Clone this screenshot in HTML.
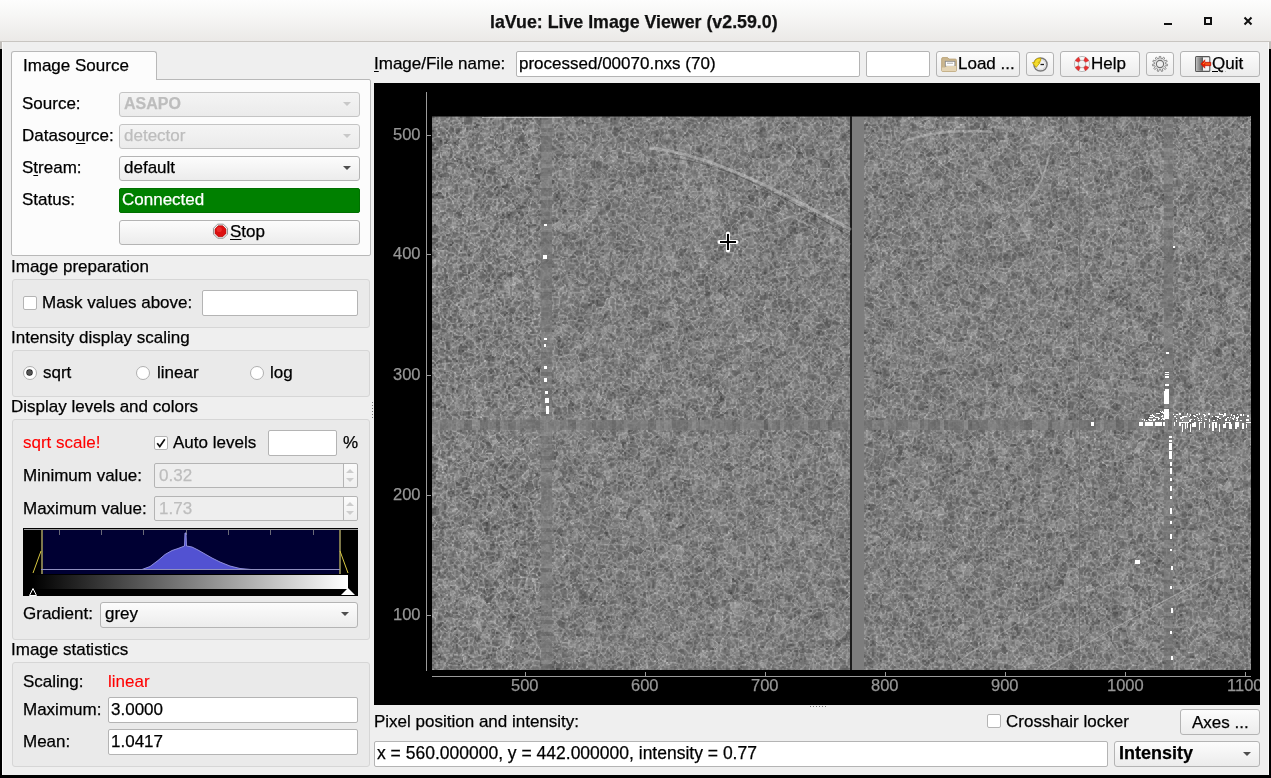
<!DOCTYPE html>
<html><head><meta charset="utf-8">
<style>
*{box-sizing:border-box;margin:0;padding:0}
html,body{-webkit-font-smoothing:antialiased;width:1271px;height:778px;overflow:hidden;background:#efefef;font-family:"Liberation Sans",sans-serif;font-size:17px;color:#000;position:relative;-webkit-text-stroke:0.25px currentColor}
.a{position:absolute}
.t{will-change:transform;position:absolute;white-space:nowrap;line-height:17px;font-size:17px}
.btn{position:absolute;border:1px solid #b4b4b4;border-radius:3px;background:linear-gradient(#fcfcfc,#ececec)}
.inp{position:absolute;border:1px solid #b4b4b4;border-radius:2px;background:#fff}
.grp{position:absolute;border:1px solid #d6d6d6;border-radius:3px;background:#eaeaea}
.dis{color:#bdbdbd}
.arrow{position:absolute;width:0;height:0;border-left:5px solid transparent;border-right:5px solid transparent;border-top:5px solid #4e4e4e}
.cb{position:absolute;width:14px;height:14px;border:1px solid #b4b4b4;border-radius:2px;background:#fff}
.rd{position:absolute;width:14px;height:14px;border:1px solid #b0b0b0;border-radius:50%;background:#fff}
.u{text-decoration:underline;text-underline-offset:2px}
.ax{will-change:transform;position:absolute;color:#969696;font-size:16.5px;line-height:17px;white-space:nowrap}
</style></head><body>
<!-- title bar -->
<div class="a" style="left:0;top:0;width:1271px;height:42px;background:linear-gradient(#fdfdfd 0%,#f7f7f6 35%,#ebe9e7 100%);border-bottom:1px solid #c8c5c1"></div>
<div class="t" style="left:490px;top:14px;font-weight:bold;font-size:17.8px;color:#111">laVue: Live Image Viewer (v2.59.0)</div>
<div class="a" style="left:1164px;top:23px;width:8px;height:2px;background:#111"></div>
<div class="a" style="left:1204px;top:17px;width:8px;height:8px;border:2px solid #111"></div>
<svg class="a" style="left:1243px;top:16px" width="10" height="10" viewBox="0 0 10 10"><path d="M1.5 1.5L8.5 8.5M8.5 1.5L1.5 8.5" stroke="#111" stroke-width="2"/></svg>

<!-- outer frame -->
<div class="a" style="left:0;top:42px;width:2px;height:7px;background:#c0bdb9"></div>
<div class="a" style="left:0;top:49px;width:2px;height:729px;background:#000"></div>
<div class="a" style="left:2px;top:42px;width:1px;height:733px;background:#fafafa"></div>
<div class="a" style="left:1269px;top:42px;width:2px;height:7px;background:#c0bdb9"></div>
<div class="a" style="left:1269px;top:49px;width:2px;height:729px;background:#000"></div>
<div class="a" style="left:1268px;top:42px;width:1px;height:733px;background:#fafafa"></div>
<div class="a" style="left:0;top:775px;width:1271px;height:3px;background:#000"></div>

<!-- ===== LEFT PANEL ===== -->
<!-- tab -->
<div class="a" style="left:11px;top:79px;width:360px;height:177px;border:1px solid #b8b8b8;border-radius:0 2px 2px 2px;background:#fcfcfc"></div>
<div class="a" style="left:11px;top:51px;width:146px;height:29px;border:1px solid #b8b8b8;border-bottom:none;border-radius:3px 3px 0 0;background:#fcfcfc"></div>
<div class="t" style="left:23px;top:57px">Image Source</div>

<div class="t" style="left:22px;top:95px">Source:</div>
<div class="btn" style="left:119px;top:92px;width:241px;height:25px;background:linear-gradient(#f4f4f4,#ebebeb);border-color:#c4c4c4"></div>
<div class="t dis" style="left:124px;top:95px;font-weight:bold;font-size:16px">ASAPO</div>
<div class="arrow" style="left:343px;top:102px;border-top-color:#c8c8c8;border-width:4px 4px 0 4px"></div>

<div class="t" style="left:22px;top:127px">Dataso<span class="u">u</span>rce:</div>
<div class="btn" style="left:119px;top:124px;width:241px;height:25px;background:linear-gradient(#f4f4f4,#ebebeb);border-color:#c4c4c4"></div>
<div class="t dis" style="left:124px;top:127px">detector</div>
<div class="arrow" style="left:343px;top:134px;border-top-color:#c8c8c8;border-width:4px 4px 0 4px"></div>

<div class="t" style="left:22px;top:159px">S<span class="u">t</span>ream:</div>
<div class="btn" style="left:119px;top:156px;width:241px;height:25px"></div>
<div class="t" style="left:124px;top:159px">default</div>
<div class="arrow" style="left:343px;top:166px;border-width:4px 4px 0 4px"></div>

<div class="t" style="left:22px;top:191px">Status:</div>
<div class="a" style="left:119px;top:188px;width:241px;height:25px;background:#008000;border-radius:2px;border:1px solid #007000"></div>
<div class="t" style="left:122px;top:191px;color:#fff">Connected</div>

<div class="btn" style="left:119px;top:220px;width:241px;height:25px"></div>
<svg class="a" style="left:212px;top:223px" width="17" height="17" viewBox="0 0 17 17"><polygon points="15.52,11.11 11.41,15.22 5.59,15.22 1.48,11.11 1.48,5.29 5.59,1.18 11.41,1.18 15.52,5.29" fill="#f4f4f4" stroke="#8a8a8a" stroke-width="0.9"/><polygon points="13.95,10.46 10.76,13.65 6.24,13.65 3.05,10.46 3.05,5.94 6.24,2.75 10.76,2.75 13.95,5.94" fill="#dc1010" stroke="#a80000" stroke-width="0.6"/><circle cx="7.2" cy="6.5" r="2.6" fill="#ff4a4a" opacity="0.45"/></svg>
<div class="t" style="left:230px;top:223px"><span class="u">S</span>top</div>

<!-- Image preparation -->
<div class="t" style="left:11px;top:258px">Image preparation</div>
<div class="grp" style="left:12px;top:279px;width:358px;height:49px"></div>
<div class="cb" style="left:23px;top:296px"></div>
<div class="t" style="left:42px;top:294px">Mask values above:</div>
<div class="inp" style="left:202px;top:290px;width:156px;height:26px"></div>

<!-- Intensity display scaling -->
<div class="t" style="left:11px;top:329px">Intensity display scaling</div>
<div class="grp" style="left:12px;top:350px;width:358px;height:47px"></div>
<div class="rd" style="left:23px;top:366px"></div>
<div class="a" style="left:27.4px;top:370.3px;width:5px;height:5px;border-radius:50%;background:#555;box-shadow:0 0 0 0.7px #1a1a1a"></div>
<div class="t" style="left:43px;top:364px">sqrt</div>
<div class="rd" style="left:136px;top:366px"></div>
<div class="t" style="left:157px;top:364px">linear</div>
<div class="rd" style="left:250px;top:366px"></div>
<div class="t" style="left:270px;top:364px">log</div>

<!-- Display levels and colors -->
<div class="t" style="left:11px;top:398px">Display levels and colors</div>
<div class="grp" style="left:12px;top:419px;width:358px;height:221px"></div>
<div class="t" style="left:23px;top:434px;color:#ff0000;-webkit-text-stroke:0.1px #ff0000">sqrt scale!</div>
<div class="cb" style="left:154px;top:436px"></div>
<svg class="a" style="left:155px;top:437px" width="12" height="12" viewBox="0 0 12 12"><path d="M2.2 6.2L4.8 9.6L9.8 2.2" fill="none" stroke="#111" stroke-width="1.7"/></svg>
<div class="t" style="left:173px;top:434px">Auto levels</div>
<div class="inp" style="left:268px;top:430px;width:69px;height:26px"></div>
<div class="t" style="left:343px;top:434px">%</div>

<div class="t" style="left:23px;top:467px">Minimum value:</div>
<div class="a" style="left:154px;top:463px;width:204px;height:25px;border:1px solid #b4b4b4;border-radius:2px;background:#eeeeee"></div>
<div class="a" style="left:344px;top:464px;width:13px;height:23px;background:linear-gradient(#fbfbfb,#efefef);border-radius:0 2px 2px 0"></div><div class="a" style="left:343px;top:464px;width:1px;height:23px;background:#b4b4b4"></div>
<div class="t dis" style="left:159px;top:467px">0.32</div>
<svg class="a" style="left:344px;top:465px" width="12" height="21" viewBox="0 0 12 21"><path d="M2 8L6 4L10 8ZM2 13L6 17L10 13Z" fill="#cdcdcd"/></svg>

<div class="t" style="left:23px;top:500px">Maximum value:</div>
<div class="a" style="left:154px;top:496px;width:204px;height:25px;border:1px solid #b4b4b4;border-radius:2px;background:#eeeeee"></div>
<div class="a" style="left:344px;top:497px;width:13px;height:23px;background:linear-gradient(#fbfbfb,#efefef);border-radius:0 2px 2px 0"></div><div class="a" style="left:343px;top:497px;width:1px;height:23px;background:#b4b4b4"></div>
<div class="t dis" style="left:159px;top:500px">1.73</div>
<svg class="a" style="left:344px;top:498px" width="12" height="21" viewBox="0 0 12 21"><path d="M2 8L6 4L10 8ZM2 13L6 17L10 13Z" fill="#cdcdcd"/></svg>

<!-- histogram -->
<div class="a" style="left:23px;top:528px;width:335px;height:68px;background:#000"></div>
<div class="a" style="left:24px;top:529px;width:334px;height:1px;background:#9a9a9a"></div>
<div class="a" style="left:41px;top:530px;width:299px;height:44px;background:#000033"></div>
<svg class="a" style="left:23px;top:528px" width="335" height="68" viewBox="0 0 335 68">
 <g stroke="#6a6a78" stroke-width="1">
  <path d="M36.5 2V7M78.5 2V7M120.5 2V7M163.5 2V7M205.5 2V7M247.5 2V7M290.5 2V7"/>
 </g>
 <path d="M19 2V46M317 2V46" stroke="#8a8450" stroke-width="1.8"/>
 <path d="M18 23L10 45M317 23L325 45" stroke="#d8c840" stroke-width="1"/>
 <path d="M119 41.5L127 38.5L135 32.5L142 26.5L149 22.5L155 20.5L161.5 18L162 5L163 5L163.5 18L169 19L175 22L182 26L189 30L197 34L207 38L217 40.5L228 41.5Z" fill="#5252d2" stroke="#9a9ae6" stroke-width="0.9" stroke-linejoin="round"/>
 <path d="M18 41.5H317" stroke="#9090c0" stroke-width="1"/>
 <defs><linearGradient id="gg" x1="0" x2="1"><stop offset="0" stop-color="#000"/><stop offset="1" stop-color="#fff"/></linearGradient></defs>
 <rect x="10" y="47" width="315" height="14" fill="url(#gg)"/>
 <path d="M6.5 67.5L10 60.5L13.5 67.5Z" fill="none" stroke="#fff" stroke-width="1"/>
 <path d="M318 67L325 60L332 67Z" fill="#fff"/>
</svg>

<div class="t" style="left:23px;top:605px">Gradient:</div>
<div class="btn" style="left:100px;top:602px;width:258px;height:26px"></div>
<div class="t" style="left:105px;top:605px">grey</div>
<div class="arrow" style="left:341px;top:612px;border-width:4px 4px 0 4px"></div>

<!-- Image statistics -->
<div class="t" style="left:11px;top:641px">Image statistics</div>
<div class="grp" style="left:12px;top:662px;width:358px;height:105px"></div>
<div class="t" style="left:23px;top:673px">Scaling:</div>
<div class="t" style="left:108px;top:673px;color:#ff0000;-webkit-text-stroke:0.1px #ff0000">linear</div>
<div class="t" style="left:23px;top:701px">Maximum:</div>
<div class="inp" style="left:108px;top:697px;width:250px;height:26px"></div>
<div class="t" style="left:111px;top:701px">3.0000</div>
<div class="t" style="left:23px;top:733px">Mean:</div>
<div class="inp" style="left:108px;top:729px;width:250px;height:26px"></div>
<div class="t" style="left:111px;top:733px">1.0417</div>

<!-- ===== RIGHT PANEL ===== -->
<div class="t" style="left:374px;top:55px"><span class="u">I</span>mage/File name:</div>
<div class="inp" style="left:516px;top:51px;width:344px;height:26px"></div>
<div class="t" style="left:519px;top:55px">processed/00070.nxs (70)</div>
<div class="inp" style="left:866px;top:51px;width:64px;height:26px"></div>

<div class="btn" style="left:936px;top:51px;width:84px;height:26px"></div>
<svg class="a" style="left:941px;top:57px" width="16" height="15" viewBox="0 0 16 15"><path d="M0.7 1.7Q0.7 0.6 1.8 0.6H6.6L8 2.1H14.3Q15.4 2.1 15.4 3.2V13.4Q15.4 14.5 14.3 14.5H1.8Q0.7 14.5 0.7 13.4Z" fill="#cbb68e" stroke="#b9a276" stroke-width="0.9"/><rect x="4.3" y="4.3" width="9.6" height="5" fill="#fff" stroke="#8a8a8a" stroke-width="0.9"/><path d="M6 6.2H12" stroke="#a0a0a0" stroke-width="0.9"/><path d="M0.9 10.4H4L5.8 8.9H15.2V13.4Q15.2 14.3 14.3 14.3H1.8Q0.9 14.3 0.9 13.4Z" fill="#e4d4b4"/></svg>
<div class="t" style="left:958px;top:55px">Load ...</div>

<div class="btn" style="left:1026px;top:52px;width:28px;height:24px"></div>
<svg class="a" style="left:1031px;top:55px" width="18" height="18" viewBox="0 0 18 18"><circle cx="9.5" cy="9.5" r="6.6" fill="#f2f2f2" stroke="#7a7a7a" stroke-width="1.5"/><circle cx="9.5" cy="9.5" r="5" fill="none" stroke="#d0d0d0" stroke-width="0.8"/><path d="M9.5 9.5H13" stroke="#1a1a1a" stroke-width="1.3"/><path d="M4.2 5.2Q6 3 9.6 3.2V6.2Q7.8 6 7.3 7.6H9L5.2 12.3L1.4 7.6H3.6Q3.6 6.2 4.2 5.2Z" fill="#f3dc2c" stroke="#c9a800" stroke-width="0.9" stroke-linejoin="round"/></svg>

<div class="btn" style="left:1060px;top:51px;width:80px;height:26px"></div>
<svg class="a" style="left:1073px;top:55px" width="18" height="18" viewBox="0 0 18 18"><circle cx="9" cy="9" r="5.7" fill="none" stroke="#f8f8f8" stroke-width="3.4"/><circle cx="9" cy="9" r="7.6" fill="none" stroke="#a8a8a8" stroke-width="0.8"/><circle cx="9" cy="9" r="3.8" fill="none" stroke="#a8a8a8" stroke-width="0.8"/><path d="M15.65 12.24A7.4 7.4 0 0 1 12.24 15.65L10.75 12.60A4.0 4.0 0 0 0 12.60 10.75ZM5.76 15.65A7.4 7.4 0 0 1 2.35 12.24L5.40 10.75A4.0 4.0 0 0 0 7.25 12.60ZM2.35 5.76A7.4 7.4 0 0 1 5.76 2.35L7.25 5.40A4.0 4.0 0 0 0 5.40 7.25ZM12.24 2.35A7.4 7.4 0 0 1 15.65 5.76L12.60 7.25A4.0 4.0 0 0 0 10.75 5.40Z" fill="#e83030" stroke="#c02020" stroke-width="0.4"/></svg>
<div class="t" style="left:1091px;top:55px">Help</div>

<div class="btn" style="left:1146px;top:52px;width:28px;height:24px"></div>
<svg class="a" style="left:1151px;top:55px" width="18" height="18" viewBox="0 0 18 18"><path d="M8.12 3.47L8.21 1.44L9.79 1.44L9.88 3.47L11.25 3.87L12.42 2.21L13.75 3.07L12.73 4.82L13.67 5.91L15.55 5.14L16.21 6.58L14.40 7.50L14.60 8.92L16.59 9.29L16.37 10.86L14.35 10.65L13.75 11.96L15.23 13.35L14.19 14.55L12.61 13.28L11.40 14.06L11.89 16.03L10.37 16.48L9.72 14.55L8.28 14.55L7.63 16.48L6.11 16.03L6.60 14.06L5.39 13.28L3.81 14.55L2.77 13.35L4.25 11.96L3.65 10.65L1.63 10.86L1.41 9.29L3.40 8.92L3.60 7.50L1.79 6.58L2.45 5.14L4.33 5.91L5.27 4.82L4.25 3.07L5.58 2.21L6.75 3.87Z" fill="#e6e6e6" stroke="#8c8c8c" stroke-width="1" stroke-linejoin="round"/><circle cx="9" cy="9" r="3.6" fill="#eeeeee" stroke="#707070" stroke-width="1.1"/></svg>

<div class="btn" style="left:1180px;top:51px;width:80px;height:26px"></div>
<svg class="a" style="left:1195px;top:56px" width="17" height="16" viewBox="0 0 17 16"><defs><linearGradient id="dg" x1="0" x2="1"><stop offset="0" stop-color="#b8b8b8"/><stop offset="1" stop-color="#5a5a5a"/></linearGradient></defs><rect x="0.6" y="0.6" width="14.2" height="14.8" rx="1" fill="#f4f4f4" stroke="#555" stroke-width="1.1"/><rect x="1.2" y="1.2" width="6.8" height="13.6" fill="url(#dg)"/><path d="M5.8 8L9.8 3.8V6.3H15.8V9.7H9.8V12.2Z" fill="#e81c00" stroke="#c01000" stroke-width="0.6" stroke-linejoin="round"/><path d="M8 8L10 6.3M10.3 8H15" stroke="#ff9a30" stroke-width="0.9"/></svg>
<div class="t" style="left:1212px;top:55px"><span class="u">Q</span>uit</div>

<!-- image area -->
<div class="a" style="left:374px;top:83px;width:886px;height:622px;background:#000"></div>
<div class="a" style="left:432px;top:116px;width:819px;height:554px;background:#818181"></div>
<div class="a" style="left:850px;top:116px;width:2px;height:554px;background:#1c1c1c"></div>
<div class="a" style="left:852px;top:116px;width:12px;height:554px;background:#7d7d7d"></div>
<canvas id="cv" class="a" width="819" height="554" style="left:432px;top:116px"></canvas>
<script>
(function(){
var W=819,H=554,cv=document.getElementById('cv');if(!cv.getContext)return;var ctx=cv.getContext('2d');
var s=12345;function rnd(){s=(s*1103515245+12345)&0x7fffffff;return s/0x7fffffff;}
function grid(gw,gh){var g=new Float32Array(gw*gh);for(var i=0;i<g.length;i++)g[i]=rnd();return g;}
function vn(g,gw,sc,x,y){var fx=x/sc,fy=y/sc,ix=Math.floor(fx),iy=Math.floor(fy),tx=fx-ix,ty=fy-iy;
 tx=tx*tx*(3-2*tx);ty=ty*ty*(3-2*ty);
 var a=g[iy*gw+ix],b=g[iy*gw+ix+1],c=g[(iy+1)*gw+ix],d=g[(iy+1)*gw+ix+1];
 return a+(b-a)*tx+(c-a)*ty+(a-b-c+d)*tx*ty;}
var sc1=6.5,g1w=Math.ceil(W/sc1)+3,g1h=Math.ceil(H/sc1)+3,g1=grid(g1w,g1h);
var g3w=Math.ceil(W/2.6)+3,g3=grid(g3w,Math.ceil(H/2.6)+3);var sc2=11,g2w=Math.ceil(W/sc2)+3,g2h=Math.ceil(H/sc2)+3,g2=grid(g2w,g2h);
var img=ctx.createImageData(W,H),d=img.data;
var bw=Math.ceil(W/2)+1,bh=Math.ceil(H/2)+1,blk=new Float32Array(bw*bh);
for(var i=0;i<blk.length;i++){blk[i]=(rnd()+rnd()+rnd()-1.5);}
var bb=new Float32Array(Math.ceil(H/4)+2);for(var i=0;i<bb.length;i++)bb[i]=(rnd()-0.5);
var hb=new Float32Array(Math.ceil(W/4)+2);for(var i=0;i<hb.length;i++)hb[i]=(rnd()-0.5);
var MEAN=127;
var gww=Math.ceil(900/5.5)+3,gw=grid(gww,gww);var CS=6.8,cw=Math.ceil(W/CS)+2,ch=Math.ceil(H/CS)+2,px=new Float32Array(cw*ch),py=new Float32Array(cw*ch),pv=new Float32Array(cw*ch);
for(var i=0;i<cw*ch;i++){px[i]=rnd();py[i]=rnd();pv[i]=rnd()+rnd()-1;}
for(var y=0;y<H;y++)for(var x=0;x<W;x++){
 var w1=vn(gw,gww,5.5,x,y),w2=vn(gw,gww,5.5,y+37,x+11);var fx=x/CS+(w1-0.5)*0.9,fy=y/CS+(w2-0.5)*0.9,ix=Math.floor(fx),iy=Math.floor(fy),f1=9,f2=9,id=0;
 for(var j=-1;j<=1;j++)for(var i=-1;i<=1;i++){var cx=ix+i,cy=iy+j;if(cx<0||cy<0||cx>=cw||cy>=ch)continue;var q=cy*cw+cx;
  var dx=cx+px[q]-fx,dy=cy+py[q]-fy,dd=dx*dx+dy*dy; if(dd<f1){f2=f1;f1=dd;id=q;}else if(dd<f2){f2=dd;}}
 var e=Math.sqrt(f2)-Math.sqrt(f1); var rim=Math.exp(-e*3.2);
 var n2=vn(g2,g2w,sc2,x,y);
 var dv=rim*40 - 19 + pv[id]*15 + (n2-0.5)*12 + blk[(y>>1)*bw+(x>>1)]*21;
 if(x<108) dv*=1.12;
 var v=MEAN+dv;
 if(x>=109&&x<120) v=MEAN-5+dv*0.35+bb[y>>2]*22;
 if(x>=732&&x<741) v=MEAN-5+dv*0.35+bb[(y>>2)+1]*22;
 if(y>=304&&y<314&&(x<418||x>=432)) v=MEAN-5+dv*0.3+hb[x>>2]*26+hb[((x>>2)+((y>>3)*7)%40)%200]*8;
 if(x===418||x===419) v=28;
 if(x>=420&&x<432) v=125;
 if(x===647) v=MEAN-14+dv*0.3;
 var k=(y*W+x)*4; d[k]=d[k+1]=d[k+2]=v; d[k+3]=255;}
ctx.putImageData(img,0,0);
// top edge highlight
ctx.fillStyle='rgba(20,20,20,0.6)';ctx.fillRect(0,0,818,1);ctx.fillStyle='rgba(220,220,220,0.6)';ctx.fillRect(50,1,80,1);
// streaks
ctx.lineCap='round';
function st(p,w,c){ctx.beginPath();ctx.moveTo(p[0],p[1]);for(var i=2;i<p.length;i+=6)ctx.bezierCurveTo(p[i],p[i+1],p[i+2],p[i+3],p[i+4],p[i+5]);ctx.strokeStyle=c;ctx.lineWidth=w;ctx.stroke();}
st([219,32, 270,38, 320,60, 418,113],3,'rgba(215,215,215,0.4)');
st([240,42, 290,48, 330,68, 418,120],1,'rgba(40,40,40,0.35)');st([320,90, 350,95, 380,110, 418,128],1.5,'rgba(200,200,200,0.25)');
st([300,120, 330,115, 350,100, 380,95],1.5,'rgba(200,200,200,0.25)');
st([470,26, 500,14, 540,14, 560,16],2.5,'rgba(215,215,215,0.35)');st([617,40, 610,70, 600,85, 582,94],2,'rgba(210,210,210,0.35)');st([500,40, 520,55, 540,75, 555,95],1.5,'rgba(205,205,205,0.25)');
st([540,20, 560,60, 580,90, 600,130],1.5,'rgba(200,200,200,0.2)');
st([600,560, 650,530, 720,490, 790,455],1.3,'rgba(210,210,210,0.4)');
st([520,550, 560,520, 600,500, 650,470],1.3,'rgba(210,210,210,0.3)');
// white speckles
ctx.fillStyle='#fff';
var R=[[112,108,3,2],[111,139,4,4],[112,222,3,2],[112,228,2,3],[112,250,3,3],[112,262,3,4],[113,275,3,3],[113,282,4,5],[114,290,3,8],
[734,236,3,2],
[733,256,4,1],[733,258,4,1],[733,260,4,2],[733,268,4,2],[733,273,4,2],[732,275,5,13],[732,293,5,10],
[737,320,3,2],[737,324,3,2],[737,327,3,7],[737,335,3,8],[738,346,2,4],[738,352,2,6],[738,362,2,3],[738,370,2,5],[738,380,2,3],[738,392,2,6],[738,405,2,3],[738,418,2,5],[738,433,2,2],[739,450,2,4],[738,470,2,3],[739,492,2,5],[738,515,2,3],[739,540,2,4],[739,600,2,3],[739,640,2,3],
[707,306,4,4],[713,306,8,4],[723,306,7,4],[731,306,2,4],
[703,444,5,4],[659,306,3,4],[741,130,2,2]];
for(var i=0;i<R.length;i++)ctx.fillRect(R[i][0],R[i][1],R[i][2],R[i][3]);
// speckles above left horizontal part + triangle
for(var i=0;i<90;i++){var x=708+rnd()*24,y=293+rnd()*12; if((x-708)*0.5<(305-y)) continue; ctx.fillRect(x|0,y|0,1+(rnd()*2|0),1);}
// right part: upper sparse speckles
for(var i=0;i<70;i++){var x=741+rnd()*77,y=297+rnd()*8; ctx.fillRect(x|0,y|0,1+(rnd()*2|0),1+(rnd()*2|0));}
// right part: text-like bars
var bx=742;while(bx<818){var h=4+(rnd()*5|0),w=1+(rnd()*2|0);ctx.fillRect(bx,306+(rnd()*3|0),w,h);if(rnd()<0.4)ctx.fillRect(bx,306,3+(rnd()*4|0),1);bx+=2+(rnd()*4|0);}

})();
</script>
<!-- crosshair cursor -->
<svg class="a" style="left:716px;top:230px" width="24" height="24" viewBox="0 0 24 24"><path d="M12 3.5V20.5M3.5 12H20.5" stroke="#fff" stroke-width="4.2" stroke-linecap="round"/><path d="M12 4V20M4 12H20" stroke="#000" stroke-width="2.1"/></svg>
<!-- axes -->
<div class="a" style="left:426px;top:92px;width:1px;height:579px;background:#9a9a9a"></div>
<div class="a" style="left:432px;top:676px;width:819px;height:1px;background:#9a9a9a"></div>

<div class="ax" style="left:393px;top:126px">500</div>
<div class="ax" style="left:393px;top:245px">400</div>
<div class="ax" style="left:393px;top:366px">300</div>
<div class="ax" style="left:393px;top:486px">200</div>
<div class="ax" style="left:393px;top:606px">100</div>
<div class="a" style="left:427px;top:135px;width:4px;height:1px;background:#9a9a9a"></div>
<div class="a" style="left:427px;top:254px;width:4px;height:1px;background:#9a9a9a"></div>
<div class="a" style="left:427px;top:375px;width:4px;height:1px;background:#9a9a9a"></div>
<div class="a" style="left:427px;top:495px;width:4px;height:1px;background:#9a9a9a"></div>
<div class="a" style="left:427px;top:615px;width:4px;height:1px;background:#9a9a9a"></div>

<div class="ax" style="left:511px;top:677px">500</div>
<div class="ax" style="left:631px;top:677px">600</div>
<div class="ax" style="left:751px;top:677px">700</div>
<div class="ax" style="left:871px;top:677px">800</div>
<div class="ax" style="left:991px;top:677px">900</div>
<div class="ax" style="left:1107px;top:677px">1000</div>
<div class="ax" style="left:1227px;top:677px;width:33px;overflow:hidden">1100</div>
<div class="a" style="left:525px;top:672px;width:1px;height:4px;background:#9a9a9a"></div>
<div class="a" style="left:645px;top:672px;width:1px;height:4px;background:#9a9a9a"></div>
<div class="a" style="left:765px;top:672px;width:1px;height:4px;background:#9a9a9a"></div>
<div class="a" style="left:885px;top:672px;width:1px;height:4px;background:#9a9a9a"></div>
<div class="a" style="left:1005px;top:672px;width:1px;height:4px;background:#9a9a9a"></div>
<div class="a" style="left:1125px;top:672px;width:1px;height:4px;background:#9a9a9a"></div>
<div class="a" style="left:1245px;top:672px;width:1px;height:4px;background:#9a9a9a"></div>

<!-- splitter handles -->
<div class="a" style="left:372px;top:402px;width:1px;height:1px;background:#7a7a7a"></div><div class="a" style="left:810px;top:706px;width:1px;height:1px;background:#7a7a7a"></div><div class="a" style="left:372px;top:405px;width:1px;height:1px;background:#7a7a7a"></div><div class="a" style="left:813px;top:706px;width:1px;height:1px;background:#7a7a7a"></div><div class="a" style="left:372px;top:408px;width:1px;height:1px;background:#7a7a7a"></div><div class="a" style="left:816px;top:706px;width:1px;height:1px;background:#7a7a7a"></div><div class="a" style="left:372px;top:411px;width:1px;height:1px;background:#7a7a7a"></div><div class="a" style="left:819px;top:706px;width:1px;height:1px;background:#7a7a7a"></div><div class="a" style="left:372px;top:414px;width:1px;height:1px;background:#7a7a7a"></div><div class="a" style="left:822px;top:706px;width:1px;height:1px;background:#7a7a7a"></div><div class="a" style="left:372px;top:417px;width:1px;height:1px;background:#7a7a7a"></div><div class="a" style="left:825px;top:706px;width:1px;height:1px;background:#7a7a7a"></div>
<!-- bottom bar -->
<div class="t" style="left:374px;top:713px">Pixel position and intensity:</div>
<div class="cb" style="left:987px;top:714px"></div>
<div class="t" style="left:1006px;top:713px">Crosshair locker</div>
<div class="btn" style="left:1180px;top:709px;width:80px;height:26px"></div>
<div class="t" style="left:1192px;top:714px">Axes ...</div>
<div class="inp" style="left:374px;top:741px;width:734px;height:26px"></div>
<div class="t" style="left:377px;top:745px;font-size:17.5px">x = 560.000000, y = 442.000000, intensity = 0.77</div>
<div class="btn" style="left:1114px;top:741px;width:146px;height:26px"></div>
<div class="t" style="left:1119px;top:745px;font-weight:bold;font-size:18px">Intensity</div>
<div class="arrow" style="left:1243px;top:752px;border-width:4px 4px 0 4px"></div>
</body></html>
